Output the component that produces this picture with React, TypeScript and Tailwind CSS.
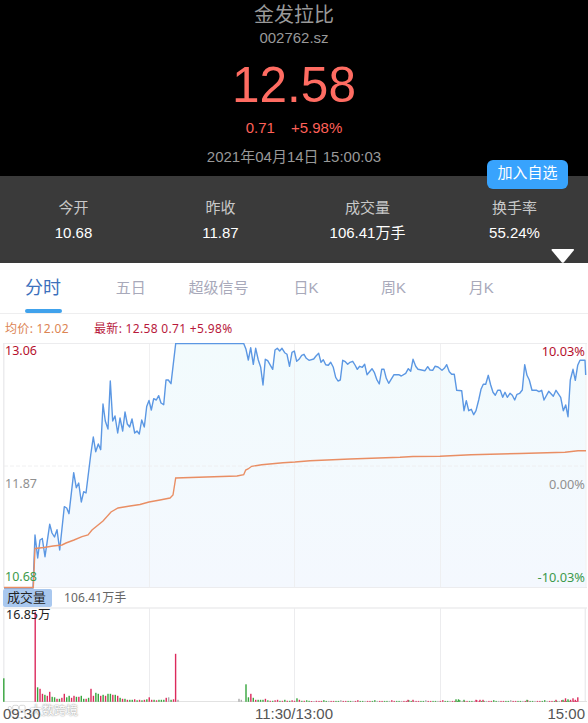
import React from "react";

const stats = [
  { label: "今开", value: "10.68" },
  { label: "昨收", value: "11.87" },
  { label: "成交量", value: "106.41万手" },
  { label: "换手率", value: "55.24%" },
];

const tabs = ["五日", "超级信号", "日K", "周K", "月K"];

const priceLine =
  "4,588 33,588 35,535 37.7,558 40,540 42.3,538.5 45,556.7 49.7,524.3 52,533 54.5,537 57,529.7 59.7,550 64.3,506.7 66.7,508 69,513.7 73.7,472.7 76.3,487.7 78.7,483 81.3,502 83.7,491.7 86,493 90.7,455 93.3,437 95.7,451.7 98.3,444 100.7,449.7 103,404 105.3,421 108,429 110.3,381 112.7,421 115,416 117.7,433 120,418 122.7,431 125,412 127.3,424 129.7,427 132,419 134.7,433 137,431 139.3,434 141.7,420 144.3,427 146.7,406.5 149,400.5 151.3,410 153.7,398.7 156.3,400 158.7,395.7 161,403 163.7,404.7 166,380 168.3,380 171,383.7 175.7,343.5 243.7,343.5 246,349.3 248.3,360 250.7,347.7 253.3,364.3 255.7,348.3 258.3,360 260.7,367.3 263,385 265.3,359.3 267.7,360.7 272.7,369.3 275,350 277.3,348.3 279.7,351 282,348.3 284.7,352.7 287,354.3 289.5,366.3 292,352.3 294.3,351 296.7,361.3 299,359.3 301.7,355.3 304,354.3 306.3,358.3 309,360.3 313.7,359 316,356 318.7,353.3 321,362.3 323.3,359.7 325.7,364.7 328.3,365.3 330.7,362.3 333.3,367.3 335.7,377.3 338,381 340.3,380 342.7,360.3 345.3,361.7 347.7,364.3 350,362.3 352.7,361.3 355,365 357.3,369.3 359.7,366.3 362.3,367.3 364.7,364.3 367,374.7 372,368.7 374.3,372.3 376.7,379.3 379.3,384 381.7,369.3 384,369.3 386.3,378.3 388.7,383.3 394,374.7 398.7,374.7 401.3,376 405.7,373.3 408.3,368.7 410.7,371.3 413,359.3 415.7,366.3 418,369.3 425,370.7 427.7,366.7 430,370 432.7,370.3 435,366.3 438,367 442,370.3 444.3,368.3 446.7,364.7 449.3,371.7 451.7,374.3 454.3,374.3 456.7,390.3 461.7,390.7 464,410.7 466.3,400.7 468.7,410.7 471.3,409.3 473.7,414.7 476,410.7 478.7,400 481,389.3 483.3,384.3 485.7,384.3 488.3,375.3 490.7,385 493,392.3 495.3,395.3 497.7,390.3 500.3,390.3 502.7,397.3 505,392.3 507.3,397.3 510,393.3 512.3,395.3 514.7,400 517,394.3 519.7,393.3 522.3,390 524.7,364.7 527,375.3 529.3,380 532,390.3 536.7,390.3 539,391.7 541.7,390.3 544,400 548.7,391.3 553.3,396.3 556,390.3 560.7,397.3 563.3,410.7 565.7,405 568,416.7 570.3,380 573,369.3 575.3,380.3 577.7,365.3 580,360.3 585,360.3 585.7,375";

const averageLine =
  "4,587.5 33.3,587.5 35,548.5 44,547.5 53,546 62,545 66,543 74,540 82,536.7 88,535 92,530 103,521 111,512 118,508 130,506 140,504.5 149,502 160,500 170,498 173,495 175.7,478 237,476 243.7,474.7 245.7,470 248,469 251.7,466.3 261.7,464.7 283,462.7 295,462 310,460.7 350,459 400,457.3 413,456.5 440,456.3 471,454.7 520,453.5 565,452.3 578,450.7 586,450.7";

// x, height, colour (r = up, g = down, n = flat)
type Bar = [number, number, "r" | "g" | "n"];

const early: [number, "r" | "g" | "n"][] = [
  [14.5, "g"], [13, "r"], [8, "r"], [7, "g"], [6, "r"], [10, "r"], [5, "g"], [4.5, "g"],
  [3, "r"], [3, "g"], [4, "r"], [8, "r"], [4.5, "g"], [6, "g"], [4, "r"], [6, "r"],
  [5, "g"], [5, "r"], [6, "g"], [3, "g"], [3, "r"], [4, "g"], [13, "r"], [6, "r"],
  [9, "g"], [8, "g"], [6, "r"], [7, "g"], [6, "r"], [8, "g"], [8, "g"], [7, "r"],
  [7, "g"], [6, "r"], [4, "g"], [3, "r"], [3, "g"], [2, "r"], [2, "g"], [2, "g"],
  [2.5, "r"], [1.5, "g"], [2, "r"], [1.5, "g"], [2, "r"], [2.5, "g"], [4.5, "r"], [2, "r"],
  [2, "g"], [1.5, "r"], [2, "g"], [2, "g"], [2, "g"], [4, "r"], [4.5, "n"], [2, "g"], [2.5, "r"],
];

const late: [number, "r" | "g" | "n"][] = [
  [17.5, "g"], [4.5, "g"], [8, "r"], [4, "g"], [2, "r"], [2, "g"], [2, "g"], [2, "g"],
  [3, "r"], [1.5, "g"], [1, "r"], [1, "g"], [1.5, "r"], [2, "r"], [1, "g"], [1, "r"],
  [2, "g"], [1, "r"], [1, "g"], [1.5, "r"], [1, "r"], [3.5, "g"], [2, "r"], [1, "g"],
  [1, "r"], [1.5, "g"], [1, "g"], [0.8, "r"], [0.8, "n"], [1, "r"],
];

const bars: Bar[] = [
  [3.8, 23.5, "g"],
  [35.2, 90, "r"],
  ...early.map(([h, c], i): Bar => [37.6 + i * 2.427, h, c]),
  [175.6, 48, "r"],
  [178, 2, "n"],
  [239, 3, "n"],
  [241.3, 2, "n"],
  ...late.map(([h, c], i): Bar => [246 + i * 2.427, h, c]),
];

for (let i = 0; i < 107; i++) {
  bars.push([319 + i * 2.427, i % 7 === 2 ? 1.6 : 0.9, i % 5 < 2 ? "r" : i % 5 === 4 ? "n" : "g"]);
}

const closing: Bar[] = [
  [408, 2, "r"], [413, 2, "r"], [456, 2.5, "g"], [458.5, 2.5, "g"], [464, 2, "g"], [476, 2, "r"],
  [480, 2, "r"], [483, 2, "r"], [527, 2, "g"], [556, 2, "r"], [563, 2, "g"], [565.5, 3.5, "r"],
  [568, 2.5, "g"], [570.5, 2, "r"], [573, 3.5, "r"], [575.3, 2, "r"], [577.8, 4.5, "r"],
];

const barColors = { r: "#dc2a5c", g: "#36a53c", n: "#aaaaaa" };

const PriceChart = () => (
  <div className="relative h-[246px]">
    <svg width="588" height="246" viewBox="0 343 588 246" className="block">
      <defs>
        <linearGradient id="area" x1="0" y1="0" x2="0" y2="1">
          <stop offset="0" stopColor="#f2fbfd" />
          <stop offset="1" stopColor="#f4f8fe" />
        </linearGradient>
      </defs>
      <polygon points={`${priceLine} 585.7,588 4,588`} fill="url(#area)" />
      <g stroke="#ececee" fill="none">
        <path d="M3 343.5H587M3 587.5H587" />
        <path d="M3.8 343V588" strokeWidth="1.5" />
        <path d="M149.5 343V588M294.5 343V588M440.5 343V588M586 343V588" strokeWidth="0.8" />
        <path d="M4 466H586" strokeDasharray="4 2" strokeWidth="0.8" />
      </g>
      <polyline points={priceLine} fill="none" stroke="#5b97e3" strokeWidth="1.4" strokeLinejoin="round" />
      <polyline points={averageLine} fill="none" stroke="#e98e64" strokeWidth="1.4" />
    </svg>
    <div className="absolute inset-y-0 left-[5px] text-[12.5px] leading-4">
      <div className="absolute top-0 text-[#b50f2d]">13.06</div>
      <div className="absolute top-[133px] text-[#909090]">11.87</div>
      <div className="absolute top-[226px] text-[#3c9a4b]">10.68</div>
    </div>
    <div className="absolute inset-y-0 right-[3px] text-[12.8px] leading-4">
      <div className="absolute right-0 top-0 text-[#b50f2d]">10.03%</div>
      <div className="absolute right-0 top-[133px] text-[#909090]">0.00%</div>
      <div className="absolute right-0 top-[226px] whitespace-nowrap text-[#3c9a4b]">-10.03%</div>
    </div>
  </div>
);

const VolumeChart = () => (
  <div className="relative h-[95px]">
    <svg width="588" height="95" viewBox="0 607 588 95" className="block">
      <g stroke="#ececee" fill="none">
        <path d="M3 608H587" strokeWidth="1.5" />
        <path d="M3.8 608V702M585.3 608V702" strokeWidth="1.4" />
        <path d="M149.5 608V702M294.5 608V702M440.5 608V702" />
        <path d="M3 701.5H587" stroke="#e2e2e2" />
      </g>
      {[...bars, ...closing].map(([x, h, c], i) => (
        <rect key={i} x={x - 0.7} y={701.8 - h} width="1.4" height={h} fill={barColors[c]} />
      ))}
    </svg>
    <div className="absolute left-[6px] top-0 text-[12.5px] leading-4 text-[#222]">16.85万</div>
  </div>
);

const Watermark = () => (
  <div className="absolute left-[7px] top-0 flex h-[18px] items-center gap-[3px]">
    <svg width="20" height="17" viewBox="0 0 21 17" fill="#fff" stroke="#c4c4c4" strokeWidth="0.7">
      <circle cx="3" cy="5" r="1.8" />
      <rect x="6" y="2" width="6" height="5" rx="1.5" />
      <rect x="13" y="2" width="6" height="5" rx="1.5" />
      <path d="M2 9h5l3 3 3-3h6v6H6z" />
    </svg>
    <span className="text-xs leading-none text-white [text-shadow:0_0_1px_#999,0_0_2px_#aaa]">大数跨境</span>
  </div>
);

const App = () => {
  return (
    <div className="h-[723px] w-[588px] overflow-hidden bg-white font-['Liberation_Sans','Noto_Sans_CJK_SC',sans-serif]">
      <header className="flex h-44 flex-col items-center bg-black text-[#999]">
        <h1 className="mt-[3px] text-xl leading-6">金发拉比</h1>
        <div className="mt-px text-[15px] leading-5">002762.sz</div>
        <div className="mt-[9px] text-[49.5px] leading-[56px] text-[#ff6c62]">12.58</div>
        <div className="mt-[5px] flex gap-4 text-[15px] leading-5 text-[#ff6059]">
          <span>0.71</span>
          <span>+5.98%</span>
        </div>
        <div className="mt-[9px] text-[15px] leading-5">2021年04月14日 15:00:03</div>
      </header>

      <section className="relative h-[87px] bg-[#3a3a3a]">
        <div className="grid grid-cols-4 pt-[22px] text-center text-[15px] leading-5">
          {stats.map((s) => (
            <div key={s.label}>
              <div className="text-[#c8c8c8]">{s.label}</div>
              <div className="mt-[5px] text-white">{s.value}</div>
            </div>
          ))}
        </div>
        <button className="absolute -top-4 left-[487px] h-[29px] w-[81px] rounded-md bg-[#38a3fd] pb-0.5 text-[15px] text-white">
          加入自选
        </button>
        <svg className="absolute bottom-0 left-[551px]" width="24" height="14" viewBox="0 0 24 14">
          <path d="M1.5 0h20.500q1.700 0 .7 1.500L13 13.300q-1.200 1-2.400 0L.8 1.500Q0 0 1.500 0z" fill="#fff" />
        </svg>
      </section>

      <nav className="flex h-[51px] border-b border-[#eeeeef] text-[15px] text-[#a8a9ba]">
        <div className="flex w-[87px] justify-center">
          <div className="flex w-[37px] flex-col justify-between text-lg leading-[50px] text-[#3c70bc]">
            <span className="h-[46px] whitespace-nowrap">分时</span>
            <span className="h-1 rounded-sm bg-[#40a2ec]" />
          </div>
        </div>
        {tabs.map((t) => (
          <div key={t} className="w-[87.6px] text-center leading-[49px]">{t}</div>
        ))}
      </nav>

      <main className="font-['Noto_Sans','Noto_Sans_CJK_SC',sans-serif]">
        <div className="flex h-[29px] items-center pl-[5px] text-xs tracking-[0.32px]">
          <span className="w-[89px] text-[#dc8453]">均价: 12.02</span>
          <span className="text-[#b8193c]">最新: 12.58 0.71 +5.98%</span>
        </div>
        <PriceChart />
        <div className="flex h-[18px] text-xs leading-[18px]">
          <span className="ml-[3px] w-[49px] rounded-xs bg-[#a9c8ef] pr-0.5 text-center text-[12.8px] leading-4 text-[#222]">成交量</span>
          <span className="ml-3 text-[#666] tracking-[0.1px]">106.41万手</span>
        </div>
        <VolumeChart />
        <div className="relative flex h-[21px] justify-between px-[3px] font-['Liberation_Sans','Noto_Sans_CJK_SC',sans-serif] text-[15px] leading-[23px] text-[#555]">
          <Watermark />
          <span className="relative">09:30</span>
          <span className="relative">11:30/13:00</span>
          <span className="relative">15:00</span>
        </div>
      </main>
    </div>
  );
};

export default App;
